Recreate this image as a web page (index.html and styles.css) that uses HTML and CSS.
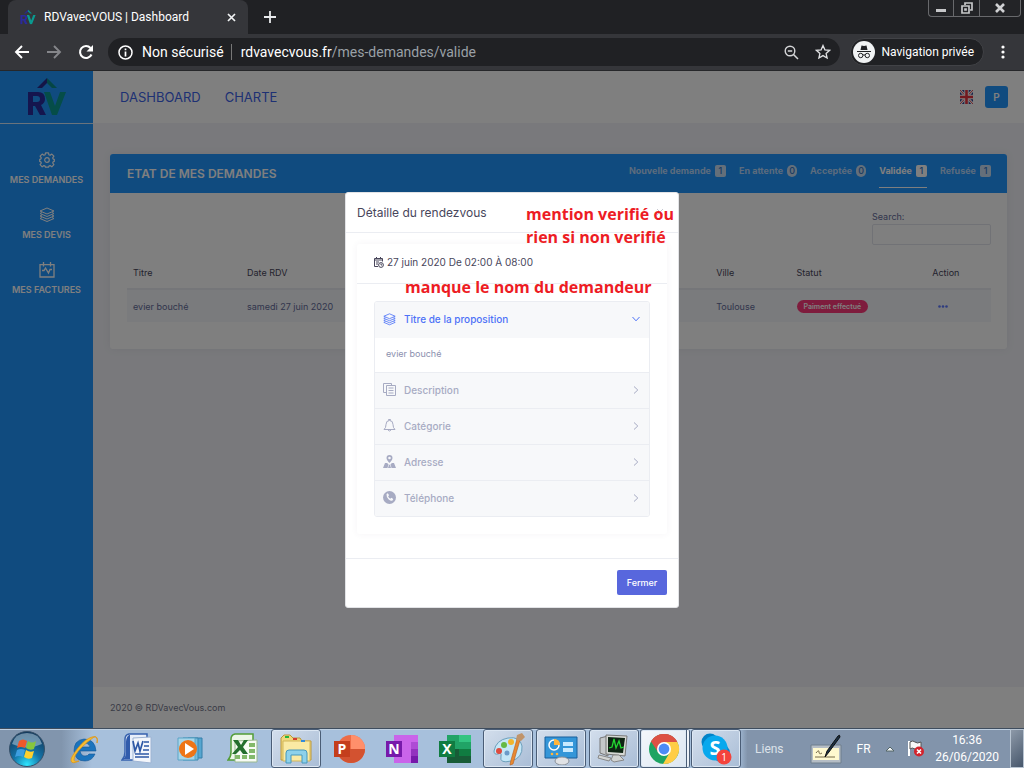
FILE: index.html
```html
<!DOCTYPE html>
<html lang="fr">
<head>
<meta charset="utf-8">
<title>RDVavecVOUS | Dashboard</title>
<meta name="viewport" content="width=device-width, initial-scale=1">
<link rel="stylesheet" href="styles.css">
</head>
<body>
<svg class="defs" aria-hidden="true">
  <defs>
    <symbol id="layers" viewBox="0 0 16 16"><g fill="none" stroke="currentColor" stroke-linejoin="round"><path d="M8 1l7 3-7 3-7-3z"/><path d="M3 5.500L1 6.500l7 3 7-3-2-1M3 8L1 9l7 3 7-3-2-1M3 10.500l-2 1 7 3 7-3-2-1"/></g></symbol>
    <symbol id="gear" viewBox="0 0 16 16"><g fill="none" stroke="currentColor" stroke-width="1.200" stroke-linejoin="round"><path d="M6.500.8h3l.4 2 1.200.5 1.700-1.200 2.100 2.100-1.200 1.700.5 1.200 1.100.3v2l-1.100.4-.5 1.200 1.200 1.700-2.100 2.100-1.700-1.200-1.200.5-.4 1.100h-3l-.4-1.100-1.200-.5-1.700 1.200-2.100-2.100 1.200-1.700-.5-1.200-1.100-.4v-2l1.100-.3.5-1.200-1.200-1.700 2.100-2.100 1.700 1.200 1.200-.5z"/><circle cx="8" cy="8" r="2.300"/></g></symbol>
    <symbol id="calendar-chart" viewBox="0 0 16 16"><g fill="none" stroke="currentColor" stroke-width="1.300"><path d="M1 2.600h14V15H1zM4.500 0v4.500M11.500 0v4.500M3 8.500h2l1.500-2.500 3 5 1.500-3.500h2"/></g></symbol>
    <symbol id="rv-logo" viewBox="0 0 40 38"><path d="M10 10L20 0v5l-5 5z" fill="#2b2a8c"/><path d="M20 0l10 10h-5l-5-5z" fill="#0a8c88"/><path d="M1 14h10q7 0 7 7 0 4-4 6l5 10h-6l-5-9H6v9H1zm5 4v6h4q3 0 3-3t-3-3z" fill="#2b2a9c" fill-rule="evenodd"/><path d="M17 14h6l5 14 5-14h6l-9 23h-5z" fill="#0a9a90"/></symbol>
    <symbol id="chevron" viewBox="0 0 8 8"><path d="M2 .5L5.800 4 2 7.500" fill="none" stroke="currentColor"/></symbol>
  </defs>
</svg>

<header class="browser">
  <div class="tabstrip">
    <div class="tab">
      <svg class="favicon" viewBox="0 0 40 38"><use href="#rv-logo"/></svg>
      <span class="tab-title">RDVavecVOUS | Dashboard</span>
      <button class="plain" aria-label="Fermer l'onglet"><svg width="9" height="9" viewBox="0 0 9 9"><path d="M1 1l7 7M8 1L1 8" stroke="#f1f3f4" stroke-width="1.700"/></svg></button>
    </div>
    <button class="plain new-tab" aria-label="Nouvel onglet"><svg width="12" height="12" viewBox="0 0 12 12"><path d="M6 0v12M0 6h12" stroke="#e8eaed" stroke-width="1.800"/></svg></button>
    <div class="window-controls">
      <button class="win" aria-label="Réduire"><svg width="12" height="10" viewBox="0 0 12 10"><path d="M1 6h10v3H1z" fill="#c6c7c9"/></svg></button>
      <button class="win" aria-label="Restaurer"><svg width="12" height="12" viewBox="0 0 12 12"><path d="M4 3V1h7v7H9M1 4h7v7H1zM4 7h1v1H4z" fill="none" stroke="#c6c7c9" stroke-width="1.700"/></svg></button>
      <button class="win win-close" aria-label="Fermer"><svg width="10" height="10" viewBox="0 0 10 10"><path d="M1 1l8 8M9 1L1 9" stroke="#d0d1d3" stroke-width="2.600"/></svg></button>
    </div>
  </div>
  <div class="toolbar">
    <button class="plain nav" aria-label="Précédent"><svg width="16" height="16" viewBox="0 0 16 16"><path d="M15 8H2M8 2L2 8l6 6" fill="none" stroke="#fff" stroke-width="1.900"/></svg></button>
    <button class="plain nav" aria-label="Suivant"><svg width="16" height="16" viewBox="0 0 16 16"><path d="M1 8h13M8 2l6 6-6 6" fill="none" stroke="#85868a" stroke-width="1.900"/></svg></button>
    <button class="plain nav" aria-label="Actualiser"><svg width="16" height="16" viewBox="0 0 16 16"><path d="M13.500 10.500A6 6 0 1 1 12.500 4" fill="none" stroke="#fff" stroke-width="2.100"/><path d="M15 1v6.500H8.500z" fill="#fff"/></svg></button>
    <div class="omnibox">
      <svg width="15" height="15" viewBox="0 0 15 15"><circle cx="7.500" cy="7.500" r="6.500" fill="none" stroke="#fff" stroke-width="1.500"/><path d="M7.500 3.500v1.700M7.500 6.500v5" stroke="#fff" stroke-width="1.700"/></svg>
      <span class="insecure">Non sécurisé</span>
      <span class="url"><b>rdvavecvous.fr</b>/mes-demandes/valide</span>
      <svg width="15" height="15" viewBox="0 0 15 15"><circle cx="6" cy="6" r="4.800" fill="none" stroke="#d5d6d8" stroke-width="1.400"/><path d="M9.500 9.500L14 14M3.800 6h4.400" stroke="#d5d6d8" stroke-width="1.500"/></svg>
      <svg class="star" width="16" height="16" viewBox="0 0 16 16"><path d="M8 1.500l1.900 4.300 4.700.5-3.500 3.100 1 4.600L8 11.600 3.900 14l1-4.600L1.400 6.300l4.700-.5z" fill="none" stroke="#e0e1e3" stroke-width="1.300"/></svg>
    </div>
    <button class="incognito">
      <svg width="22" height="22" viewBox="0 0 22 22"><circle cx="11" cy="11" r="11" fill="#f1f3f4"/><path d="M7.500 9l1-4.500 2.500.5 2.500-.5 1 4.500zM4 10h14v1H4z" fill="#202124"/><g fill="none" stroke="#202124"><circle cx="7.700" cy="14.500" r="2.200"/><circle cx="14.300" cy="14.500" r="2.200"/><path d="M9.900 14.200q1.100-.8 2.200 0"/></g></svg>
      Navigation privée
    </button>
    <button class="plain menu" aria-label="Menu"><svg width="4" height="14" viewBox="0 0 4 14" fill="#fff"><circle cx="2" cy="2" r="1.600"/><circle cx="2" cy="7" r="1.600"/><circle cx="2" cy="12" r="1.600"/></svg></button>
  </div>
</header>

<div class="page">
  <aside class="sidebar">
    <a class="brand" href="#" aria-label="RDVavecVOUS"><svg width="40" height="38"><use href="#rv-logo"/></svg></a>
    <nav class="side-nav">
      <a href="#"><svg width="16" height="16"><use href="#gear"/></svg>MES DEMANDES</a>
      <a href="#"><svg width="16" height="16"><use href="#layers"/></svg>MES DEVIS</a>
      <a href="#"><svg width="16" height="16"><use href="#calendar-chart"/></svg>MES FACTURES</a>
    </nav>
  </aside>
  <div class="main">
    <header class="topbar">
      <a href="#">DASHBOARD</a>
      <a href="#">CHARTE</a>
      <button class="plain lang" aria-label="English"><svg width="13" height="14" viewBox="0 0 13 14"><path d="M0 0h13v14H0z" fill="#31418f"/><path d="M0 0l13 14M13 0L0 14" stroke="#fff" stroke-width="2.600"/><path d="M0 0l13 14M13 0L0 14" stroke="#e04a55"/><path d="M6.500 0v14M0 7h13" stroke="#fff" stroke-width="4.400"/><path d="M6.500 0v14M0 7h13" stroke="#e5333f" stroke-width="2.600"/></svg></button>
      <button class="avatar">P</button>
    </header>
    <main class="content">
      <section class="card">
        <header class="card-head">
          <h1>ETAT DE MES DEMANDES</h1>
          <nav class="status-tabs">
            <a href="#">Nouvelle demande <span class="count">1</span></a>
            <a href="#">En attente <span class="count round">0</span></a>
            <a href="#">Acceptée <span class="count round">0</span></a>
            <a href="#" class="active">Validée <span class="count">1</span></a>
            <a href="#">Refusée <span class="count">1</span></a>
          </nav>
        </header>
        <div class="card-body">
          <div class="search">
            <label for="search">Search:</label>
            <input id="search" type="search">
          </div>
          <table>
            <colgroup><col class="c-title"><col class="c-date"><col class="c-city"><col class="c-status"><col class="c-action"></colgroup>
            <thead><tr><th>Titre</th><th>Date RDV</th><th>Ville</th><th>Statut</th><th>Action</th></tr></thead>
            <tbody><tr><td>evier bouché</td><td>samedi 27 juin 2020</td><td>Toulouse</td><td><span class="pill">Paiment effectué</span></td><td><button class="plain more" aria-label="Actions"><svg width="10" height="3" viewBox="0 0 10 3" fill="currentColor"><circle cx="1.500" cy="1.500" r="1.300"/><circle cx="5" cy="1.500" r="1.300"/><circle cx="8.500" cy="1.500" r="1.300"/></svg></button></td></tr></tbody>
          </table>
        </div>
      </section>
    </main>
    <footer class="footer">2020 © RDVavecVous.com</footer>
  </div>

  <div class="backdrop">
    <div class="modal" role="dialog" aria-labelledby="modal-title">
      <header class="modal-head"><h2 id="modal-title">Détaille du rendezvous</h2><button class="plain close" aria-label="Fermer"><svg width="8" height="8" viewBox="0 0 8 8"><path d="M1 1l6 6M7 1L1 7" stroke="#c8c9d2"/></svg></button></header>
      <div class="modal-body">
        <div class="portlet">
          <h3 class="portlet-head"><svg width="11" height="11" viewBox="0 0 11 11"><g fill="none" stroke="currentColor"><path d="M5 9.500H1.500v-8h8v3M1.500 3h8M3.500 0v2M7.500 0v2M3 5h3M3 7h2"/><circle cx="8" cy="8" r="2.400"/><path d="M8 6.500V8h1.200"/></g></svg>27 juin 2020 De 02:00 À 08:00</h3>
          <div class="accordion">
            <button class="item open" aria-expanded="true"><svg width="13" height="13"><use href="#layers"/></svg><span>Titre de la proposition</span><svg class="chev" width="8" height="8"><use href="#chevron"/></svg></button>
            <p class="panel">evier bouché</p>
            <button class="item"><svg width="13" height="13" viewBox="0 0 13 13"><path d="M3.500 9.500h-3v-9h8v2M3.500 2.500h9v10h-9zM5.500 5h5M5.500 7.500h5M5.500 10h5" fill="none" stroke="currentColor"/></svg><span>Description</span><svg class="chev" width="8" height="8"><use href="#chevron"/></svg></button>
            <button class="item"><svg width="13" height="13" viewBox="0 0 13 13"><path d="M1 10.500q2-1.500 2-5Q3 1.500 6.500 1.500T10 5.500q0 3.500 2 5zM5.500 1.500V.5h2v1M5 11q1.500 2 3 0" fill="none" stroke="currentColor"/></svg><span>Catégorie</span><svg class="chev" width="8" height="8"><use href="#chevron"/></svg></button>
            <button class="item"><svg width="13" height="13" viewBox="0 0 13 13" fill="currentColor"><path fill-rule="evenodd" d="M6.500 0a3 3 0 0 1 3 3C9.500 5 6.500 8 6.500 8s-3-3-3-5a3 3 0 0 1 3-3zm0 1.700a1.300 1.300 0 1 0 0 2.600 1.300 1.300 0 0 0 0-2.600z"/><path d="M2 8h2l1.500 1.300-1 3.700H0zM9 8h2l2 5H8.500l-1-3.700zM6 9.800h1L8 13H5z"/></svg><span>Adresse</span><svg class="chev" width="8" height="8"><use href="#chevron"/></svg></button>
            <button class="item"><svg width="13" height="13" viewBox="0 0 13 13"><circle cx="6.500" cy="6.500" r="6.500" fill="currentColor"/><path d="M3.500 3l1.300-.8 1.300 2-1 1q.7 1.700 2.200 2.500l1-1 2 1.300-.8 1.400Q8.200 10.500 5.700 8.400T3.500 3z" fill="#f7f8fa"/></svg><span>Téléphone</span><svg class="chev" width="8" height="8"><use href="#chevron"/></svg></button>
          </div>
        </div>
      </div>
      <footer class="modal-foot"><button class="primary">Fermer</button></footer>
      <p class="note note-verified">mention verifié ou<br>rien si non verifié</p>
      <p class="note note-name">manque le nom du demandeur</p>
    </div>
  </div>
</div>

<footer class="taskbar">
  <button class="start" aria-label="Démarrer"><svg width="38" height="38" viewBox="0 0 38 38"><defs><radialGradient id="orb" cx=".5" cy=".95" r=".9"><stop offset="0" stop-color="#2ee6ff"/><stop offset=".45" stop-color="#1474a8"/><stop offset="1" stop-color="#123a5e"/></radialGradient></defs><circle cx="19" cy="19" r="17.500" fill="url(#orb)" stroke="#365068"/><path d="M4 14Q7 3 19 3t15 11Q19 21 4 14z" fill="#b4cede" opacity=".55"/><path d="M11 11q4-3 8 0l-2 7q-4-2-8 0z" fill="#f0582a"/><path d="M20 11q4 3 8 0l-2 8q-4 2-8-1z" fill="#86c63c"/><path d="M9 20q4-2 8 0l-2 7q-4-2-8 0z" fill="#3d9ee0"/><path d="M18 20q4 3 8 1l-2 7q-4 2-8-1z" fill="#ffd02e"/></svg></button>
  <nav class="launchers">
    <button class="app" aria-label="Internet Explorer"><svg width="32" height="32" viewBox="0 0 32 32"><path d="M28 18H12q1 5 5 5 3 0 4-2h6q-3 7-10 7Q7 28 6 18 6 7 16 6q11 0 12 12zm-6-4q-1-4-5-4-4 0-5 4z" fill="#1b74bd" stroke="#145696" stroke-width=".6"/><path d="M29 10q2-8-5-6-7 2-14 11T3 27q0 5 8 1-5 1-5-1 0-5 7-12T26 4q4-1 3 6z" fill="#f5bd31" stroke="#dd971c" stroke-width=".8"/></svg></button>
    <button class="app" aria-label="Word"><svg width="32" height="32" viewBox="0 0 32 32"><path d="M8 1h18v24q-4 3-10 2H1q3-3 3-8V6q0-4 4-5z" fill="#e8effa" stroke="#3762ae" stroke-width="1.500"/><path d="M8 2q-3 2-3 7v10q0 5-3 7h7V2z" fill="#315cac"/><path d="M12 5l18-1v26l-18-2z" fill="#f3f6fb" stroke="#9eb4d4"/><path d="M12 8l2 10 3-8 2 8 3-10M23 9h5M23 13h5M22 17h6M14 21h14M14 24h14" fill="none" stroke="#2c57a5" stroke-width="1.700"/></svg></button>
    <button class="app" aria-label="Lecteur Windows Media"><svg width="32" height="32" viewBox="0 0 32 32"><path d="M14 5h14v20H14z" fill="#56a6d0" stroke="#347fa9"/><path d="M9 5h15v22H9z" fill="#79bddd" stroke="#3b87af"/><path d="M4 5h17v22H4z" fill="#a8d5e8" stroke="#5aa5c7"/><circle cx="14" cy="16" r="9" fill="#ee7517"/><path d="M11 10l9 6-9 6z" fill="#fff"/></svg></button>
    <button class="app" aria-label="Excel 2007"><svg width="32" height="32" viewBox="0 0 32 32"><path d="M8 1h18v24q-4 3-10 2H1q3-3 3-8V6q0-4 4-5z" fill="#edf7e8" stroke="#539d37" stroke-width="1.500"/><path d="M8 8l22-1v22H8z" fill="#f7fbf4" stroke="#9ab990"/><path d="M22 10h6v4h-6zM22 16h6v4h-6zM22 22h6v4h-6zM15 22h5v4h-5zM8 22h5v4H8z" fill="#83b96a"/><path d="M6 7h5l3 5 3-5h4l-5 7 5 7h-5l-3-4-4 4H5l6-7z" fill="#246e2d"/></svg></button>
    <button class="app running" aria-label="Explorateur Windows"><svg width="34" height="32" viewBox="0 0 34 32"><path d="M2 5l3-3h6l3 3h7l2 3h9v19H2z" fill="#f0d77c" stroke="#b9973d"/><path d="M4 8h27v20H4z" fill="#faeaa4" stroke="#d1b65b"/><path d="M6 3h4v2H6z" fill="#24b63c"/><path d="M14 5h4v2h-4z" fill="#d43e30"/><path d="M22 7h4v2h-4z" fill="#338bdb"/><path d="M7 30V20q0-3 3-3h15q3 0 3 3v10h-5v-8H12v8z" fill="#8dd1eb" stroke="#4698bd"/></svg></button>
    <button class="app" aria-label="PowerPoint"><svg width="32" height="30" viewBox="0 0 32 30"><circle cx="18" cy="15" r="14" fill="#ed6c47"/><path d="M18 1a14 14 0 0 1 14 14H18z" fill="#ff8f6b"/><path d="M4 15h28a14 14 0 0 1-28 0z" fill="#d35230"/><path d="M1 7h16v16H1z" fill="#c43e1c"/><text class="glyph" x="9" y="20">P</text></svg></button>
    <button class="app" aria-label="OneNote"><svg width="32" height="30" viewBox="0 0 32 30"><path d="M8 1h24v28H8z" fill="#ca64ea"/><path d="M25 8h7v7h-7z" fill="#ae4bd5"/><path d="M25 15h7v7h-7z" fill="#9332bf"/><path d="M25 22h7v7h-7z" fill="#7719aa"/><path d="M0 7h16v16H0z" fill="#7719aa"/><text class="glyph" x="8" y="20">N</text></svg></button>
    <button class="app" aria-label="Excel"><svg width="32" height="30" viewBox="0 0 32 30"><path d="M8 1h12v28H8z" fill="#21a366"/><path d="M20 1h12v7H20z" fill="#33c481"/><path d="M20 8h12v7H20z" fill="#21a366"/><path d="M8 15h24v14H8z" fill="#185c37"/><path d="M20 15h12v7H20z" fill="#107c41"/><path d="M0 7h16v16H0z" fill="#107c41"/><text class="glyph" x="8" y="20">X</text></svg></button>
    <button class="app running" aria-label="Paint"><svg width="34" height="34" viewBox="0 0 34 34"><path d="M3 19Q5 8 17 6t14 8q1 12-11 15Q8 32 10 24q1-4-3-2-4 1-4-3z" fill="#c5e7f7" stroke="#6c9fbb"/><circle cx="8" cy="19" r="3" fill="#df4b3e"/><circle cx="13" cy="13" r="3" fill="#65b944"/><circle cx="20" cy="10" r="3" fill="#f1b52d"/><circle cx="16" cy="21" r="2.500" fill="#6b9cc9"/><path d="M26 7l3 1-7 24-3 1 1-5z" fill="#e88931" stroke="#b35c1d" stroke-width=".6"/><path d="M25 8l1-5 5-2 3 4-4 4z" fill="#c0946b"/></svg></button>
    <button class="app running" aria-label="Panneau de configuration"><svg width="34" height="32" viewBox="0 0 34 32"><path d="M1 4h32v21H1z" fill="#3496d8" stroke="#185e9b"/><circle cx="10" cy="12" r="5" fill="none" stroke="#fff" stroke-width="1.500"/><path d="M10 12V6q6 0 6 6z" fill="#ffb53d"/><path d="M19 9h10v4H19zM19 15h10v4H19z" fill="#c8eaff"/><circle cx="8" cy="21" r="1.300" fill="#ffb53d"/><circle cx="13" cy="21" r="1.300" fill="#ffb53d"/><ellipse cx="18" cy="28" rx="7" ry="4" fill="#e0e2e5" stroke="#8b9199"/></svg></button>
    <button class="app running" aria-label="Gestionnaire des tâches"><svg width="34" height="32" viewBox="0 0 34 32"><path d="M3 5l8-2v20l-8-3z" fill="#c5c8ca" stroke="#777"/><path d="M9 2l21 1-2 20-19-2z" fill="#d7d9d5" stroke="#777"/><path d="M11 4l17 1-2 15-15-1z" fill="#102515"/><path d="M12 15l3-1 2-8 2 9 3-7 2 7 3-1" fill="none" stroke="#22d831" stroke-width="1.300"/><path d="M16 22h6l5 5-10 2-3-2zM2 22l12 3-2 3-11-3z" fill="#d2d4d3" stroke="#888"/></svg></button>
  </nav>
  <nav class="launchers tight">
    <button class="app current" aria-label="Chrome"><svg width="32" height="32" viewBox="0 0 32 32"><circle cx="16" cy="16" r="15" fill="#1da462"/><path d="M16 16L3 8.500A15 15 0 0 1 29 8.500z" fill="#dd5144"/><path d="M16 9h13.300A15 15 0 0 1 15 31l7-12z" fill="#ffcd46"/><path d="M3 8.500A15 15 0 0 1 29.300 9H16l-6 10z" fill="#dd5144"/><circle cx="16" cy="16" r="7" fill="#fff"/><circle cx="16" cy="16" r="5.400" fill="#4c8bf5"/></svg></button>
    <button class="app running" aria-label="Skype, 1 notification"><svg width="34" height="34" viewBox="0 0 34 34"><circle cx="11" cy="10" r="8.500" fill="#0083c8"/><circle cx="22" cy="21" r="9" fill="#0086d0"/><circle cx="16" cy="16" r="12.500" fill="#08a8ed"/><text class="glyph skype" x="16" y="23">S</text><circle cx="25" cy="25" r="7.500" fill="#f4433c"/><text class="glyph badge" x="25" y="29">1</text></svg></button>
  </nav>
  <div class="tray">
    <span class="links">Liens</span>
    <svg class="pen" width="34" height="32" viewBox="0 0 34 32"><path d="M2 12h30v18H2z" fill="#b5bdc5" stroke="#6f7e8d"/><path d="M4 15h26v12H4z" fill="#fff9cf"/><path d="M6 24h20M7 20q3-4 3-1t3 1" fill="none" stroke="#766b49"/><path d="M16 24l2-6L29 3q2-2 2 1L20 19z" fill="#1b3144" stroke="#111"/></svg>
    <span class="lang-code">FR</span>
    <svg class="arrow" width="10" height="6" viewBox="0 0 10 6"><path d="M1 5l4-4 4 4z" fill="#f5f7f9" stroke="#566"/></svg>
    <svg class="flag" width="17" height="17" viewBox="0 0 17 17"><path d="M2 1v15" stroke="#fff" stroke-width="2"/><path d="M3 2q3-2 5 0t6 0v7q-3 2-6 0t-5 0z" fill="#f8f8f8" stroke="#555"/><circle cx="12" cy="11.500" r="5" fill="#d3232c"/><path d="M10 9.500l4 4M14 9.500l-4 4" stroke="#fff" stroke-width="1.600"/></svg>
    <time class="clock">16:36<br>26/06/2020</time>
    <button class="show-desktop" aria-label="Afficher le bureau"></button>
  </div>
</footer>
</body>
</html>
```

FILE: styles.css
```css
* { box-sizing: border-box; }

body {
  margin: 0;
  min-height: 100vh;
  display: flex;
  flex-direction: column;
  font-family: Inter, "Noto Sans", sans-serif;
  font-size: 9px;
  color: #646c9a;
}

h1, h2, h3, p { margin: 0; font-weight: 500; }
a { color: inherit; text-decoration: none; }
button { font-family: inherit; }
svg { flex: none; display: block; }
.defs { position: absolute; width: 0; height: 0; }

.plain {
  padding: 0;
  border: 0;
  background: none;
  color: inherit;
  display: flex;
  align-items: center;
  justify-content: center;
}

/* Browser window */
.browser {
  background: #202124;
  color: #fff;
  font-family: Roboto, "Noto Sans", sans-serif;
  border-bottom: 1px solid #26272a;
}
.tabstrip { display: flex; align-items: stretch; height: 34px; padding-left: 8px; }
.tab {
  width: 240px;
  display: flex;
  align-items: center;
  gap: 8px;
  padding: 0 12px;
  background: #35363a;
  border-radius: 8px 8px 0 0;
  font-size: 12px;
}
.favicon { width: 16px; height: 16px; }
.tab-title { flex: 1; white-space: nowrap; }
.new-tab { width: 44px; }
.window-controls { display: flex; align-self: flex-start; margin-left: auto; margin-right: 3px; }
.win {
  width: 26px;
  height: 17px;
  padding: 0;
  display: flex;
  align-items: center;
  justify-content: center;
  background: #232427;
  border: 1px solid #68696c;
  border-top: 0;
  border-right-width: 0;
}
.win:first-child { width: 25px; border-bottom-left-radius: 4px; }
.win-close { width: 42px; border-right-width: 1px; border-bottom-right-radius: 4px; }

.toolbar {
  height: 36px;
  display: flex;
  align-items: center;
  padding: 0 16px 0 6px;
  background: #35363a;
}
.nav { width: 32px; height: 28px; }
.omnibox {
  flex: 1;
  height: 28px;
  margin-left: 6px;
  padding: 0 9px 0 10px;
  display: flex;
  align-items: center;
  background: #202124;
  border-radius: 14px;
  font-size: 14px;
  white-space: nowrap;
}
.insecure {
  margin-left: 9px;
  padding-right: 7px;
  border-right: 1px solid #777;
  line-height: 16px;
}
.url { flex: 1; margin-left: 9px; color: #9aa0a6; }
.url b { font-weight: 400; color: #fff; }
.star { margin-left: 16px; }
.incognito {
  height: 28px;
  margin-left: 10px;
  padding: 0 9px 0 2px;
  display: flex;
  align-items: center;
  gap: 7px;
  background: #202124;
  border: 1px solid #414246;
  border-radius: 14px;
  color: #fff;
  font-size: 12px;
}
.menu { width: 10px; margin-left: 14px; }

/* Site */
.page { flex: 1; display: flex; position: relative; }
.sidebar { width: 93px; background: #2196ff; color: #fff; }
.brand {
  height: 53px;
  display: flex;
  align-items: center;
  justify-content: center;
  border-bottom: 1px solid #d5e6f8;
}
.side-nav { padding-top: 28px; display: flex; flex-direction: column; gap: 19px; }
.side-nav a {
  height: 36px;
  display: flex;
  flex-direction: column;
  align-items: center;
  gap: 5px;
  font-size: 9px;
  line-height: 14px;
  font-weight: 600;
  white-space: nowrap;
}
.main { flex: 1; min-width: 0; display: flex; flex-direction: column; background: #f2f3f8; }
.topbar {
  height: 52px;
  display: flex;
  align-items: center;
  gap: 24px;
  padding: 0 16px 0 27px;
  background: #fff;
  color: #3d63e8;
  font-size: 13px;
}
.lang { margin-left: auto; }
.avatar {
  width: 23px;
  height: 22px;
  margin-left: -12px;
  padding: 0;
  border: 0;
  border-radius: 3px;
  background: #2196ff;
  color: #fff;
  font-size: 10px;
  font-weight: 600;
}
.content { flex: 1; padding: 31px 17px; }
.card { background: #fff; border-radius: 3px; box-shadow: 0 0 8px rgba(82, 63, 105, .08); }
.card-head {
  height: 39px;
  display: flex;
  justify-content: space-between;
  padding: 0 16px 0 17px;
  background: #2196ff;
  border-radius: 3px 3px 0 0;
  color: #fff;
}
h1 { font-size: 12px; line-height: 39px; font-weight: 600; }
.status-tabs { display: flex; gap: 13px; height: 34px; font-weight: 700; color: #b8d8fa; }
.status-tabs a { display: flex; align-items: center; gap: 4px; white-space: nowrap; border-bottom: 1px solid transparent; }
.status-tabs .active { color: #fff; border-color: #fff; }
.count {
  width: 11px;
  line-height: 12px;
  border-radius: 2px;
  background: #c9dff5;
  color: #3274c4;
  text-align: center;
  font-weight: 500;
}
.count.round { width: 10px; border-radius: 5px; }
.active .count { background: #fff; }
.card-body { padding: 17px 16px 27px 17px; }
.search { width: 119px; margin-left: auto; display: flex; flex-direction: column; gap: 1px; }
.search label { line-height: 13px; }
.search input {
  width: 100%;
  height: 21px;
  border: 1px solid #e2e5ec;
  border-radius: 2px;
  background: #fff;
}
table { width: 100%; margin-top: 12px; border-collapse: collapse; table-layout: fixed; }
.c-title { width: 13.2%; }
.c-date { width: 54.3%; }
.c-city { width: 9.3%; }
.c-status { width: 15.7%; }
.c-action { width: 7.5%; }
th, td { padding: 0 6px; text-align: left; white-space: nowrap; font-weight: 400; }
th { height: 32px; color: #48465b; border-bottom: 2px solid #ebedf2; }
td { height: 33px; background: #f5f7fa; }
td:last-child { padding-left: 12px; }
.pill {
  display: inline-block;
  padding: 0 7px;
  line-height: 13px;
  border-radius: 7px;
  background: #fd397a;
  color: #fff;
  font-size: 7px;
  font-weight: 600;
}
.more { color: #5d78ff; }
.footer { height: 41px; padding-left: 17px; line-height: 41px; background: #fff; color: #74788d; }

/* Dialog */
.backdrop {
  position: absolute;
  inset: 0;
  display: flex;
  align-items: center;
  justify-content: center;
  background: rgba(0, 0, 0, .5);
}
.modal { position: relative; width: 334px; background: #fff; border: 1px solid #e2e3e6; border-radius: 3px; }
.modal-head {
  height: 40px;
  display: flex;
  align-items: center;
  justify-content: space-between;
  padding: 0 14px 0 11px;
  border-bottom: 1px solid #ebedf2;
  color: #48465b;
}
h2 { font-size: 12px; font-weight: 400; }
.modal-body { padding: 11px 11px 24px; }
.portlet { border-radius: 3px; box-shadow: 0 0 7px rgba(82, 63, 105, .06); padding-bottom: 17px; }
.portlet-head {
  height: 40px;
  display: flex;
  align-items: center;
  gap: 3px;
  padding: 0 0 2px 16px;
  border-bottom: 1px solid #ebedf2;
  color: #48465b;
  font-size: 10px;
  font-weight: 400;
}
.accordion { margin: 17px 17px 0; border: 1px solid #ebedf2; border-radius: 3px; overflow: hidden; }
.item {
  width: 100%;
  height: 36px;
  display: flex;
  align-items: center;
  gap: 8px;
  padding: 0 9px 1px 8px;
  border: 0;
  border-top: 1px solid #ebedf2;
  background: #f7f8fa;
  color: #a7abc3;
  font-size: 10px;
  font-weight: 500;
  text-align: left;
}
.item.open { border-top: 0; color: #4d72f7; }
.item span { flex: 1; }
.open .chev { transform: rotate(90deg); }
.panel { height: 34px; padding-left: 11px; line-height: 32px; font-weight: 400; color: #8b90ae; }
.modal-foot {
  height: 49px;
  display: flex;
  align-items: center;
  justify-content: flex-end;
  padding: 0 11px;
  border-top: 1px solid #ebedf2;
}
.primary {
  width: 50px;
  height: 25px;
  padding: 0;
  border: 0;
  border-radius: 2px;
  background: #5867dd;
  color: #fff;
  font-size: 9px;
  font-weight: 500;
}
.note {
  position: absolute;
  color: #ed1c24;
  font-family: "Open Sans", "Noto Sans", sans-serif;
  font-size: 16px;
  font-weight: 700;
  line-height: 23px;
  white-space: nowrap;
}
.note-verified { left: 180px; top: 10px; }
.note-name { left: 59px; top: 83px; }

/* Desktop taskbar */
.taskbar {
  height: 40px;
  display: flex;
  align-items: stretch;
  background: linear-gradient(90deg, #8195ad 0, #8195ad 6%, #a7c0dc 9%, #a7c0dc 72%, #8294ab 73%);
  border-top: 1px solid #3f4d5e;
  box-shadow: inset 0 1px 0 #bfd0e2;
  font-family: Roboto, "Noto Sans", sans-serif;
  color: #fff;
}
.start { width: 59px; padding: 0 0 0 8px; border: 0; background: none; }
.launchers { display: flex; gap: 3px; }
.launchers.tight { gap: 1px; margin-left: 1px; }
.app {
  width: 50px;
  padding: 0;
  display: flex;
  align-items: center;
  justify-content: center;
  border: 1px solid transparent;
  background: none;
}
.running, .current {
  border-color: #4a5d76;
  border-radius: 3px;
  background: linear-gradient(135deg, #d3deec, #a9bdd6);
  box-shadow: inset 0 0 0 1px #dce7f3;
}
.current { background: linear-gradient(135deg, #f4f7fb, #dce6f1); border-right: 4px double #4a5d76; }
.glyph { fill: #fff; font-family: "Open Sans", sans-serif; font-size: 14px; font-weight: 700; text-anchor: middle; }
.glyph.skype { font-size: 20px; }
.glyph.badge { font-size: 10px; font-weight: 400; }
.tray { flex: 1; display: flex; align-items: center; font-size: 12px; }
.links { margin-left: 14px; color: #dce2e9; }
.pen { margin-left: 25px; }
.lang-code { margin-left: 14px; }
.arrow { margin-left: 14px; }
.flag { margin-left: 12px; }
.clock { margin-left: auto; margin-right: 11px; text-align: center; line-height: 17px; }
.show-desktop {
  width: 14px;
  align-self: stretch;
  padding: 0;
  border: 1px solid #b8c4d1;
  background: linear-gradient(135deg, #8d99a8, #46566b);
}
```
